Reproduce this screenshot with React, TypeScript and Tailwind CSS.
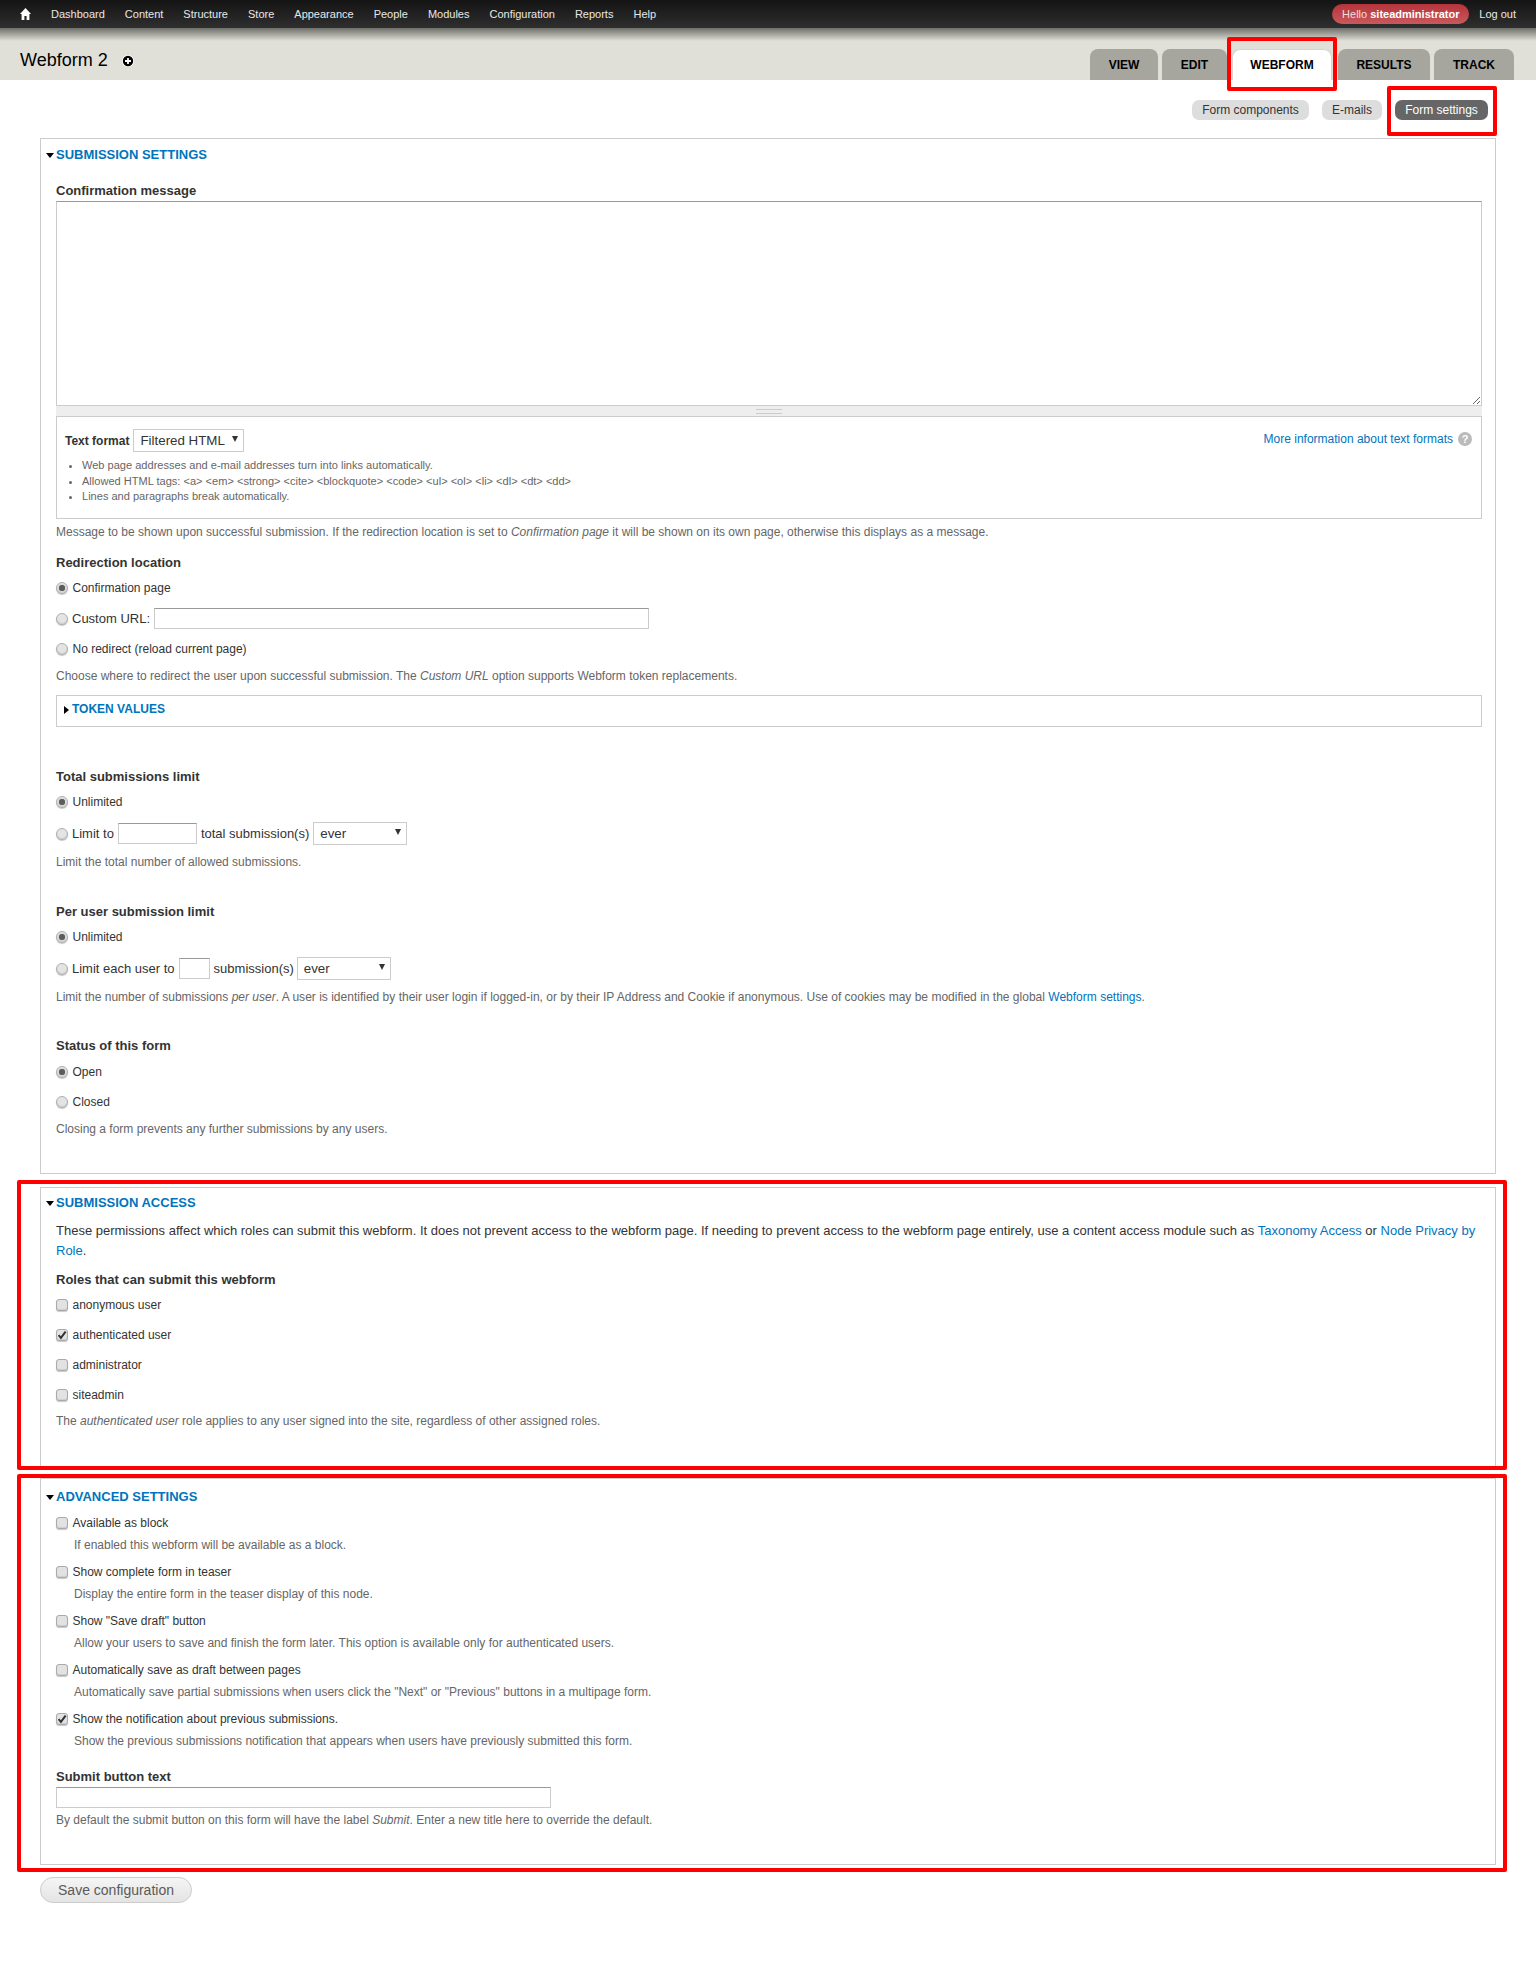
import type { ReactNode } from "react";

const navLinks = ["Dashboard", "Content", "Structure", "Store", "Appearance", "People", "Modules", "Configuration", "Reports", "Help"];

function Tab({ label, active, className }: { label: string; active?: boolean; className: string }) {
  return (
    <div
      className={`flex h-[31px] items-center justify-center rounded-t-[8px] text-[12px] font-bold uppercase text-black ${active ? "border-x border-t border-[#d4d4ce] bg-white" : "bg-[#a6a69e]"} ${className}`}
    >
      {label}
    </div>
  );
}

function Arrow({ open }: { open: boolean }) {
  return open ? (
    <svg width="8" height="5" viewBox="0 0 8 5" className="shrink-0">
      <path d="M0 0h8L4 5z" fill="#000" />
    </svg>
  ) : (
    <svg width="5" height="8" viewBox="0 0 5 8" className="shrink-0">
      <path d="M0 0l5 4-5 4z" fill="#000" />
    </svg>
  );
}

function Legend({ title }: { title: string }) {
  return (
    <div className="-ml-[10px] flex h-[30px] items-center">
      <Arrow open />
      <a className="ml-[2px] text-[13px] font-bold uppercase text-[#0074bd]">{title}</a>
    </div>
  );
}

function Label({ children, className }: { children: ReactNode; className: string }) {
  return <div className={`h-5 text-[13px] font-bold leading-5 text-[#333] ${className}`}>{children}</div>;
}

function Desc({ children, className }: { children: ReactNode; className: string }) {
  return <div className={`text-[12px] leading-5 text-[#666] ${className}`}>{children}</div>;
}

function Radio({ checked }: { checked?: boolean }) {
  return (
    <span className="flex h-[12px] w-[12px] shrink-0 items-center justify-center rounded-full border border-[#b0b0b0] bg-[#e4e4e4] shadow-[0_1px_1px_#c8c8c8,inset_0_-1px_1px_#d0d0d0]">
      {checked && <span className="h-[6px] w-[6px] rounded-full bg-[#5c5c5c] shadow-[0_0_1px_#777]" />}
    </span>
  );
}

function Check({ checked }: { checked?: boolean }) {
  return (
    <span className="flex h-[12px] w-[12px] shrink-0 items-center justify-center rounded-[3px] border border-[#aaa] bg-[#e2e2e2] shadow-[0_1px_1px_#c8c8c8,inset_0_-1px_1px_#cfcfcf]">
      {checked && (
        <svg width="10" height="10" viewBox="0 0 10 10">
          <path d="M1.6 5.2l2.3 2.7L8.6 1.6" fill="none" stroke="#333" strokeWidth="2" />
        </svg>
      )}
    </span>
  );
}

function Option({
  children,
  className,
  kind = "radio",
  checked,
  large,
}: {
  children: ReactNode;
  className: string;
  kind?: "radio" | "check";
  checked?: boolean;
  large?: boolean;
}) {
  return (
    <div className={`flex min-h-5 items-center text-[#333] ${large ? "text-[13px]" : "text-[12px]"} ${className}`}>
      {kind === "radio" ? <Radio checked={checked} /> : <Check checked={checked} />}
      <span className={`flex items-center ${large ? "ml-[4px]" : "ml-[4.5px]"}`}>{children}</span>
    </div>
  );
}

function TextBox({ className }: { className: string }) {
  return <input readOnly className={`h-[21px] border border-[#ccc] border-t-[#999] bg-white ${className}`} />;
}

function Select({ value, className }: { value: string; className: string }) {
  return (
    <span className={`relative flex h-[23px] items-center border border-[#ccc] bg-white pl-[6px] text-[13.33px] text-[#333] ${className}`}>
      {value}
      <svg width="6" height="6" viewBox="0 0 6 6" className="absolute right-[5px] top-[6px]">
        <path d="M0 0h6L3 6z" fill="#333" />
      </svg>
    </span>
  );
}

function Fieldset({ children, className }: { children: ReactNode; className: string }) {
  return <div className={`border border-[#ccc] pl-[15px] pr-[13px] ${className}`}>{children}</div>;
}

function AdvancedItem({ label, desc, checked, className }: { label: string; desc: string; checked?: boolean; className: string }) {
  return (
    <div className={`pt-[1px] ${className}`}>
      <Option kind="check" checked={checked} className="">
        {label}
      </Option>
      <Desc className="ml-[18px] mt-[2px]">{desc}</Desc>
    </div>
  );
}

export default function App() {
  return (
    <div className="relative h-[1971px] bg-white font-['Liberation_Sans',Arial,sans-serif]">
      {/* top toolbar */}
      <nav className="flex h-[28px] items-center bg-gradient-to-b from-[#141414] to-[#2f2f2f] pl-[20px] pr-[20px] text-[11px] text-[#e8e8e8]">
        <svg width="11" height="12" viewBox="0 0 11 12" className="shrink-0">
          <path d="M5.5 0L0 6h1.6v6h2.8V8h2.2v4h2.8V6H11z" fill="#fff" />
        </svg>
        <div className="ml-[20px] flex gap-[20px]">
          {navLinks.map((link) => (
            <a key={link}>{link}</a>
          ))}
        </div>
        <div className="ml-auto flex h-5 w-[137px] items-center justify-center rounded-[10px] bg-gradient-to-b from-[#b5333a] to-[#c9585c] text-[#f3dcdc]">
          Hello&nbsp;<b className="text-white">siteadministrator</b>
        </div>
        <a className="ml-[10px]">Log out</a>
      </nav>

      <header className="flex h-[52px] items-end justify-between bg-[#e0e0d8] bg-[linear-gradient(#6e6e69,#e0e0d8_13px)] pr-[22px]">
        <div className="mb-[6px] ml-[20px] flex items-center">
          <h1 className="text-[18px] leading-[28px] text-black">Webform 2</h1>
          <svg width="12" height="12" viewBox="0 0 12 12" className="ml-[14px] mt-[2px]">
            <circle cx="6" cy="6" r="6" fill="#fff" />
            <circle cx="6" cy="6" r="5.2" fill="#000" />
            <path d="M6 3v6M3 6h6" stroke="#fff" strokeWidth="1.8" />
          </svg>
        </div>
        <div className="flex">
          <Tab label="View" className="w-[68px]" />
          <Tab label="Edit" className="ml-[4px] w-[65px]" />
          <Tab label="Webform" active className="ml-[5px] w-[100px]" />
          <Tab label="Results" className="ml-[6px] w-[92px]" />
          <Tab label="Track" className="ml-[4px] w-[80px]" />
        </div>
      </header>

      <main className="px-[40px]">
        <div className="flex h-[58px] items-start justify-end pt-[20px] pr-[8px] text-[12px]">
          <a className="flex h-5 w-[117px] items-center justify-center rounded-[7px] bg-[#dddddd] text-[#333]">Form components</a>
          <a className="ml-[13px] flex h-5 w-[60px] items-center justify-center rounded-[7px] bg-[#dddddd] text-[#333]">E-mails</a>
          <a className="ml-[13px] flex h-5 w-[93px] items-center justify-center rounded-[7px] bg-[#666] text-white">Form settings</a>
        </div>

        {/* submission settings */}
        <Fieldset className="pb-[34px]">
          <div className="pt-[1px]">
            <Legend title="Submission settings" />
          </div>
          <Label className="mt-[11px]">Confirmation message</Label>
          <textarea readOnly className="block h-[205px] w-full resize-y border border-[#ccc] border-t-[#999] bg-white" />
          <div className="flex h-[11px] items-center justify-center border-b border-[#ccc] bg-[#eee]">
            <span className="h-[5px] w-[26px] border-y border-[#ccc]" />
          </div>
          <div className="h-[102px] border-x border-b border-[#ccc] pl-[8px] pr-[9px]">
            <div className="flex items-start justify-between pt-[12px]">
              <div className="flex items-center">
                <span className="text-[12px] font-bold text-[#333]">Text format</span>
                <Select value="Filtered HTML" className="ml-[4px] w-[111px]" />
              </div>
              <div className="mt-[1px] flex items-center text-[12px] text-[#0074bd]">
                <a>More information about text formats</a>
                <span className="ml-[5px] flex h-[14px] w-[14px] items-center justify-center rounded-full bg-[#bbb] text-[11px] font-bold text-white">?</span>
              </div>
            </div>
            <ul className="mt-[6px] list-disc pl-[17px] text-[11.05px] leading-[15.5px] text-[#666]">
              <li>Web page addresses and e-mail addresses turn into links automatically.</li>
              <li>Allowed HTML tags: &lt;a&gt; &lt;em&gt; &lt;strong&gt; &lt;cite&gt; &lt;blockquote&gt; &lt;code&gt; &lt;ul&gt; &lt;ol&gt; &lt;li&gt; &lt;dl&gt; &lt;dt&gt; &lt;dd&gt;</li>
              <li>Lines and paragraphs break automatically.</li>
            </ul>
          </div>
          <Desc className="mt-[3px]">
            Message to be shown upon successful submission. If the redirection location is set to <em>Confirmation page</em> it will be shown on its own page, otherwise this displays as a message.
          </Desc>
          <Label className="mt-[11px]">Redirection location</Label>
          <Option checked className="mt-[5px]">Confirmation page</Option>
          <Option large className="mt-[10px]">
            Custom URL:
            <TextBox className="ml-[4px] w-[495px]" />
          </Option>
          <Option className="mt-[10px]">No redirect (reload current page)</Option>
          <Desc className="mt-[7px]">
            Choose where to redirect the user upon successful submission. The <em>Custom URL</em> option supports Webform token replacements.
          </Desc>
          <div className="mt-[9px] flex h-[32px] items-start border border-[#ccc] pl-[7px] pt-[6px]">
            <span className="mt-[4px]"><Arrow open={false} /></span>
            <a className="ml-[3px] text-[12px] font-bold uppercase leading-[14px] text-[#0074bd]">Token values</a>
          </div>

          <Label className="mt-[40px]">Total submissions limit</Label>
          <Option checked className="mt-[5px]">Unlimited</Option>
          <Option large className="mt-[10px]">
            Limit to
            <TextBox className="mx-[4px] w-[79px]" />
            total submission(s)
            <Select value="ever" className="ml-[4px] w-[94px]" />
          </Option>
          <Desc className="mt-[7px]">Limit the total number of allowed submissions.</Desc>

          <Label className="mt-[30px]">Per user submission limit</Label>
          <Option checked className="mt-[5px]">Unlimited</Option>
          <Option large className="mt-[10px]">
            Limit each user to
            <TextBox className="mx-[4px] w-[31px]" />
            submission(s)
            <Select value="ever" className="ml-[3px] w-[94px]" />
          </Option>
          <Desc className="mt-[7px]">
            <span className="text-[12.03px]">
              Limit the number of submissions <em>per user</em>. A user is identified by their user login if logged-in, or by their IP Address and Cookie if anonymous. Use of cookies may be modified in the global <a className="text-[#0074bd]">Webform settings</a>.
            </span>
          </Desc>

          <Label className="mt-[29px]">Status of this form</Label>
          <Option checked className="mt-[6px]">Open</Option>
          <Option className="mt-[10px]">Closed</Option>
          <Desc className="mt-[7px]">Closing a form prevents any further submissions by any users.</Desc>
        </Fieldset>

        {/* submission access */}
        <Fieldset className="mt-[13px] pb-[38px]">
          <Legend title="Submission access" />
          <p className="mt-[3px] text-[13px] leading-5 text-[#333]">
            These permissions affect which roles can submit this webform. It does not prevent access to the webform page. If needing to prevent access to the webform page entirely, use a content access module such as <a className="text-[#0074bd]">Taxonomy Access</a> or <a className="text-[#0074bd]">Node Privacy by Role</a>.
          </p>
          <Label className="mt-[9px]">Roles that can submit this webform</Label>
          <Option kind="check" className="mt-[5px]">anonymous user</Option>
          <Option kind="check" checked className="mt-[10px]">authenticated user</Option>
          <Option kind="check" className="mt-[10px]">administrator</Option>
          <Option kind="check" className="mt-[10px]">siteadmin</Option>
          <Desc className="mt-[6px]">
            The <em>authenticated user</em> role applies to any user signed into the site, regardless of other assigned roles.
          </Desc>
        </Fieldset>

        {/* advanced settings */}
        <Fieldset className="mt-[8px] pb-[34px]">
          <div className="pt-[3px]">
            <Legend title="Advanced settings" />
          </div>
          <AdvancedItem label="Available as block" desc="If enabled this webform will be available as a block." className="" />
          <AdvancedItem label="Show complete form in teaser" desc="Display the entire form in the teaser display of this node." className="mt-[6px]" />
          <AdvancedItem label={'Show "Save draft" button'} desc="Allow your users to save and finish the form later. This option is available only for authenticated users." className="mt-[6px]" />
          <AdvancedItem label="Automatically save as draft between pages" desc={'Automatically save partial submissions when users click the "Next" or "Previous" buttons in a multipage form.'} className="mt-[6px]" />
          <AdvancedItem label="Show the notification about previous submissions." desc="Show the previous submissions notification that appears when users have previously submitted this form." checked className="mt-[6px]" />
          <Label className="mt-[16px]">Submit button text</Label>
          <TextBox className="block w-[495px]" />
          <Desc className="mt-[2px]">
            By default the submit button on this form will have the label <em>Submit</em>. Enter a new title here to override the default.
          </Desc>
        </Fieldset>

        <button className="mt-[12px] h-[26px] w-[152px] rounded-[13px] border border-[#ccc] bg-gradient-to-b from-[#f5f5f5] to-[#e4e4e4] text-[14px] text-[#5a5a5a]">
          Save configuration
        </button>
      </main>

      {/* red annotation boxes */}
      <div className="absolute left-[1227px] top-[37px] h-[54px] w-[110px] rounded-[2px] border-[4px] border-[#f00]" />
      <div className="absolute left-[1387px] top-[86px] h-[50px] w-[110px] rounded-[2px] border-[4px] border-[#f00]" />
      <div className="absolute left-[17px] top-[1180px] h-[290px] w-[1490px] rounded-[2px] border-[4px] border-[#f00]" />
      <div className="absolute left-[17px] top-[1474px] h-[398px] w-[1490px] rounded-[2px] border-[4px] border-[#f00]" />
    </div>
  );
}
